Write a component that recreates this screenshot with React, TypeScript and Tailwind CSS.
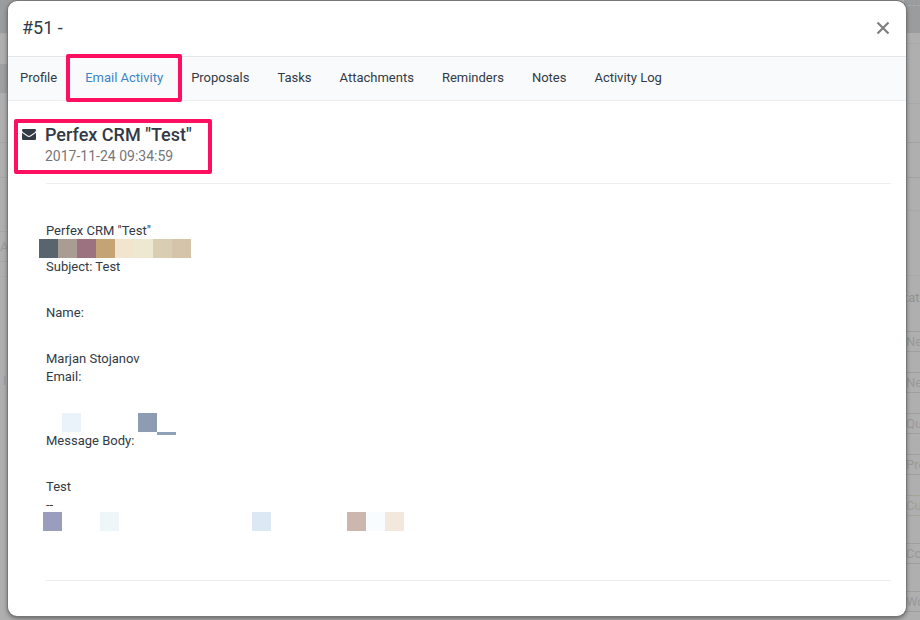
import React from "react";

const tabs = ["Profile", "Email Activity", "Proposals", "Tasks", "Attachments", "Reminders", "Notes", "Activity Log"];

const statuses = [
  { label: "Ne", row: "mt-[20px]", tone: "border-[#9f9f9f] text-[#999999]" },
  { label: "Ne", row: "mt-[20px]", tone: "border-[#9f9f9f] text-[#999999]" },
  { label: "Qu", row: "mt-[20px]", tone: "border-[#a0a0a0] text-[#999999]" },
  { label: "Pro", row: "mt-[20px]", tone: "border-[#a0a0a0] text-[#999999]" },
  { label: "Cu", row: "mt-[20px]", tone: "border-[#a5a497] text-[#a09f96]" },
  { label: "Co", row: "mt-[27px]", tone: "border-[#9f9f9f] text-[#999999]" },
  { label: "Wo", row: "mt-[27px]", tone: "border-[#9f9f9f] text-[#999999]" },
];

function Backdrop() {
  return (
    <div aria-hidden="true" className="absolute inset-0 flex justify-between overflow-hidden bg-[#afafaf] text-[13px] leading-5">
      <div className="w-10">
        <div className="h-[33px] bg-[#9b9c9e]" />
        <div className="h-[31px] border-t border-[#a9a9a9]" />
        <div className="h-[29px] bg-[#9fa0a2]" />
        <div className="h-[50px] border-b border-[#a7a7a7]" />
        <div className="h-[35px] border-b border-[#a7a7a7]" />
        <div className="h-[54px] border-b border-[#a7a7a7]" />
        <div className="h-[30px] border-b border-[#a7a7a7] pt-[5px] text-[#999999]">Activ</div>
        <div className="h-[15px] border-b border-[#a9a9a9]" />
        <div className="pt-[94px] pl-[3px] text-[#9a9ba6]">I</div>
      </div>
      <div className="w-4">
        <div className="h-[33px] bg-[#9b9c9e] pt-[5px]">
          <div className="border-t border-dashed border-[#aaabac]" />
        </div>
        <div className="h-[11px] border-b border-[#a8a8a8]" />
        <div className="h-[60px] border-b border-[#a9a9a9]" />
        <div className="h-[39px] border-b border-[#a2a2a2]" />
        <div className="h-[35px] border-b border-[#a2a2a2]" />
        <div className="h-[33px] border-b border-[#a9a9a9]" />
        <div className="h-[65px] border-b border-[#a9a9a9]" />
        <div className="h-[35px] pt-3 text-[#929292]">tat</div>
        {statuses.map((s, i) => (
          <div key={i} className={`h-[21px] border-y pl-[2px] ${s.row} ${s.tone}`}>{s.label}</div>
        ))}
      </div>
    </div>
  );
}

function Mosaic({ cells }: { cells: string[] }) {
  return (
    <div className="-mt-px -ml-[7px] flex h-[19px]">
      {cells.map((c, i) => (
        <span key={i} className={`h-[19px] w-[19px] shrink-0 ${c}`} />
      ))}
    </div>
  );
}

export default function App() {
  return (
    <div className="relative min-h-screen font-['Roboto','Liberation_Sans',sans-serif] text-[13px] leading-[18px] text-[#323a45]">
      <Backdrop />
      <div className="relative pt-px pr-[14px] pb-1 pl-2">
        <div role="dialog" aria-labelledby="lead-title" className="rounded-[9px] bg-white shadow-[0_0_0_1px_#777777,0_2px_5px_rgba(0,0,0,0.5)]">
          <header className="flex h-14 items-center justify-between border-b border-[#e5e5e5] pr-4 pb-[2px] pl-[14px]">
            <h1 id="lead-title" className="text-[18px] leading-6">#51 -</h1>
            <button type="button" aria-label="Close" className="flex h-[14px] w-[14px] items-center justify-center text-[#7f7f7f]">
              <svg viewBox="0 0 14 14" className="h-[14px] w-[14px]" fill="none" stroke="currentColor" strokeWidth="2.2">
                <path d="M1.5 1.5l11 11M12.5 1.5l-11 11" />
              </svg>
            </button>
          </header>

          <nav aria-label="Lead sections" className="border-b border-[#edf0f2] bg-[#f9fafc] pl-3">
            <ul className="flex h-[43px] items-center gap-7 pb-[2px]">
              {tabs.map((tab) => {
                const active = tab === "Email Activity";
                return (
                  <li key={tab} className="relative whitespace-nowrap">
                    <a href="#" aria-current={active ? "page" : undefined} className={active ? "text-[#3d85c6]" : ""}>{tab}</a>
                    {active && <span className="pointer-events-none absolute -inset-x-[19px] -top-[15px] -bottom-[15px] rounded-[2px] border-4 border-[#ff0f5f]" />}
                  </li>
                );
              })}
            </ul>
          </nav>

          <main className="pt-[18px] pr-[15px] pb-[35px] pl-[6px]">
            <div className="flex h-[55px] w-[198px] gap-[9px] rounded-[2px] border-4 border-[#ff0f5f] pl-1">
              <svg viewBox="0 0 14 11" className="mt-[6px] h-[11px] w-[14px] shrink-0" fill="currentColor" aria-hidden="true">
                <path d="M1.2 0h11.6q1.2 0 1.2 1.1Q14 2.3 12.8 3.2L8.6 6.2Q7 7.3 5.4 6.2L1.2 3.2Q0 2.3 0 1.2 0 0 1.2 0z" />
                <path d="M0 3.7L5 7.3q2 1.3 4 0l5-3.6v6q0 1.3-1.3 1.3H1.3Q0 11 0 9.7z" />
              </svg>
              <div className="whitespace-nowrap">
                <h2 className="text-[18px] leading-6 font-medium">Perfex CRM "Test"</h2>
                <p className="text-[14px] leading-[18px] text-[#777777]">2017-11-24 09:34:59</p>
              </div>
            </div>

            <article className="mt-[9px] ml-8 border-y border-[#eeeeee] pt-[38px] pb-[49px]">
              <p>Perfex CRM "Test"</p>
              <Mosaic cells={["bg-[#58656f]", "bg-[#a99c92]", "bg-[#9c7180]", "bg-[#c4a374]", "bg-[#f1e5d0]", "bg-[#eee7d1]", "bg-[#d9ceb3]", "bg-[#d6c4aa]"]} />
              <p>Subject: Test</p>
              <p className="mt-7">Name:</p>
              <p className="mt-7">Marjan Stojanov</p>
              <p>Email:</p>
              <div className="mt-[27px] flex h-[19px] pl-4">
                <span className="h-[19px] w-[19px] bg-[#eaf2fa]" />
                <span className="ml-[57px] h-[19px] w-[19px] bg-[#8d9cb3]" />
                <span className="mt-[19px] h-[3px] w-[19px] bg-[#8fa1b9]" />
              </div>
              <p>Message Body:</p>
              <p className="mt-7">Test</p>
              <p>--</p>
              <div className="-mt-[2px] -ml-[3px] flex h-[19px]">
                <span className="w-[19px] bg-[#9a9dbd]" />
                <span className="ml-[38px] w-[19px] bg-[#eef6fa]" />
                <span className="ml-[133px] w-[19px] bg-[#dce9f4]" />
                <span className="ml-[76px] w-[19px] bg-[#ccb7af]" />
                <span className="w-[19px] bg-[#f8fcff]" />
                <span className="w-[19px] bg-[#f3e8dc]" />
              </div>
            </article>
          </main>
        </div>
      </div>
    </div>
  );
}
